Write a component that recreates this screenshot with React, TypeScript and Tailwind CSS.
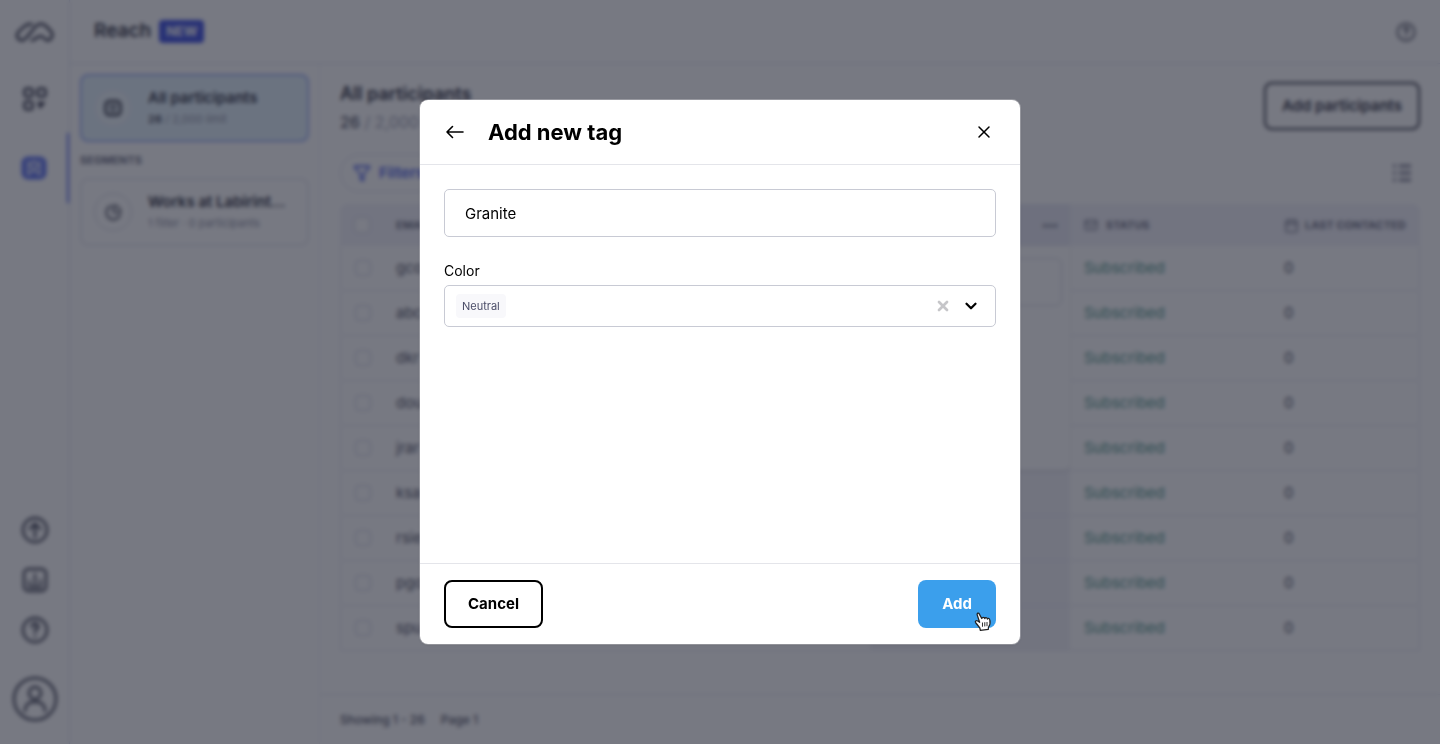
import React from "react";
import { Calendar, ChevronDown, Filter, Mail, PieChart, X } from "lucide-react";

const participants = ["gco", "abc", "dkr", "dou", "jrar", "ksa", "rsie", "pgo", "spu"];

const Logo = () => (
  <svg viewBox="45 60 120 72" className="h-6 w-10" fill="none" stroke="currentColor" strokeWidth="8" strokeLinecap="round" strokeLinejoin="round">
    <path d="M95 73C84 70 76 75 56 95C45 108 54 121 67 121C78 121 99 86 111 76Q124 66 138 78L153 94C162 105 154 121 142 121C134 121 132 108 122 108C112 108 105 121 95 121" />
  </svg>
);

const GridIcon = () => (
  <svg viewBox="0 0 26 26" className="size-6.5" fill="none" stroke="currentColor" strokeWidth="2.6">
    <rect x="2.5" y="2.5" width="8" height="8" rx="2.5" />
    <rect x="15.5" y="2.5" width="8" height="8" rx="2.5" />
    <rect x="2.5" y="15.5" width="8" height="8" rx="2.5" />
    <path d="M16 16.5h6.5L18 22Z" fill="currentColor" strokeWidth="1.5" strokeLinejoin="round" />
  </svg>
);

const ContactIcon = () => (
  <svg viewBox="0 0 28 28" className="size-7 text-[#5b70ee]" fill="none">
    <rect x="1.5" y="2.5" width="25" height="23" rx="6.5" fill="currentColor" />
    <circle cx="14" cy="11" r="3.5" stroke="#fff" strokeWidth="1.8" />
    <path d="M8.5 21c2-5 9-5 11 0M8 7v13M20 7v13" stroke="#fff" strokeWidth="1.4" strokeLinecap="round" />
  </svg>
);

const UpgradeIcon = () => (
  <svg viewBox="0 0 28 28" className="size-7" fill="none" stroke="currentColor" strokeWidth="2.4" strokeLinecap="round" strokeLinejoin="round">
    <circle cx="14" cy="14" r="12" />
    <path d="M14 21V8M8.5 13 14 7.5 19.500 13" />
  </svg>
);

const ReportsIcon = () => (
  <svg viewBox="0 0 28 28" className="size-7" fill="none" stroke="currentColor" strokeWidth="2.4" strokeLinecap="round">
    <rect x="3" y="3" width="22" height="22" rx="4.5" />
    <path d="M8.500 15v4M14 8v11M19.500 14v5M8 21h12" strokeWidth="2" />
  </svg>
);

const HelpIcon = ({ className }: { className: string }) => (
  <svg viewBox="0 0 28 28" className={className} fill="none" stroke="currentColor" strokeWidth="2.4" strokeLinecap="round">
    <circle cx="14" cy="14" r="12" />
    <path d="M11 10.500a3 3 0 1 1 4.500 2.600c-1 .6-1.500 1-1.500 2.400" strokeWidth="2.800" />
    <path d="M14 20v.2" strokeWidth="2.600" />
  </svg>
);

const UserIcon = () => (
  <svg viewBox="0 0 46 46" className="size-[46px]" fill="none" stroke="currentColor" strokeWidth="2.4">
    <circle cx="23" cy="23" r="21" />
    <circle cx="23" cy="17" r="6" />
    <path d="M13 35v-1c0-5 4-8 8-8h4c4 0 8 3 8 8v1" strokeLinecap="round" />
  </svg>
);

const FaceIcon = () => (
  <svg viewBox="0 0 18 18" className="size-[18px]" fill="none" stroke="currentColor" strokeWidth="2.4">
    <rect x="1.5" y="2" width="15" height="14" rx="4" />
    <path d="M5 7h8M6 10.5q3 2 6 0" strokeWidth="1.8" />
  </svg>
);

const ListIcon = () => (
  <svg viewBox="0 0 20 20" className="size-5" fill="none" stroke="currentColor" strokeWidth="3">
    <path d="M1 3h3M7 3h12M1 10h3M7 10h12M1 17h3M7 17h12" />
  </svg>
);

const BackIcon = () => (
  <svg viewBox="0 0 22 22" className="size-[22px]" fill="none" stroke="currentColor" strokeWidth="1.6" strokeLinecap="round" strokeLinejoin="round">
    <path d="M19 11H3M8.500 5.500 3 11l5.500 5.500" />
  </svg>
);

const HandCursor = () => (
  <svg viewBox="0 0 17 19" className="pointer-events-none absolute right-1 -bottom-1 h-5 w-[18px]" fill="#fff" stroke="#222" strokeWidth="1.2" strokeLinejoin="round">
    <path d="M5 2C4.5 .5 2.5 .8 3 2.7L5.3 9.8 3.5 8.5C2 7.6 .5 8.7 1.6 10.2L5.5 15.2 6 17.5 13.5 16.5 13.7 14.5C15.4 12 15.6 10 15 7.5 14.7 5.7 13 5.7 12.7 6.8 12.500 5 10.500 4.800 10.200 6.200 9.700 4.700 7.800 4.800 7.300 6.200Z" />
    <path d="M8 10v4M10.2 9.7v4M12.3 9.5v4" strokeWidth=".9" />
  </svg>
);

const Sidebar = () => (
  <nav className="flex w-[70px] shrink-0 flex-col items-center border-r border-[#dcdef0] text-[#35374a]">
    <a href="#home" aria-label="Home" className="flex h-16 items-center">
      <Logo />
    </a>
    <a href="#projects" aria-label="Projects" className="flex h-[69px] items-center">
      <GridIcon />
    </a>
    <a href="#reach" aria-label="Reach" className="flex h-[70px] w-full items-center justify-center border-r-2 border-[#5b70ee]">
      <ContactIcon />
    </a>
    <div className="mt-auto flex flex-col items-center gap-[22px] pb-[22px]">
      <a href="#upgrade" aria-label="Upgrade">
        <UpgradeIcon />
      </a>
      <a href="#reports" aria-label="Reports">
        <ReportsIcon />
      </a>
      <a href="#help" aria-label="Help">
        <HelpIcon className="size-7" />
      </a>
      <a href="#account" aria-label="Account" className="mt-2.5">
        <UserIcon />
      </a>
    </div>
  </nav>
);

const Segments = () => (
  <aside className="w-[250px] shrink-0 border-r border-[#f2f3fa] px-2.5 pt-2.5">
    <a href="#all" className="flex h-[68px] items-center rounded-lg border-2 border-[#9db0f7] bg-[#e2f1fb] pl-3">
      <span className="flex size-[38px] items-center justify-center rounded-full border border-[#dcdeec] bg-white/40">
        <FaceIcon />
      </span>
      <span className="ml-4">
        <span className="block text-[15px] leading-[22px] font-semibold">All participants</span>
        <span className="block text-[11px] leading-5 text-[#8d90a4]">
          <b className="text-[#4b4d5e]">26</b> / 2,000 limit
        </span>
      </span>
    </a>
    <h2 className="mt-2.5 mb-2.5 text-[11px] leading-4 font-bold text-[#6a6c80]">SEGMENTS</h2>
    <a href="#segment" className="flex h-[68px] items-center rounded-lg border-2 border-[#e8e9f3] pl-3">
      <span className="flex size-[38px] items-center justify-center rounded-full border border-[#cfd1e2]">
        <PieChart size={17} strokeWidth={2.4} className="text-[#35374a]" />
      </span>
      <span className="ml-4">
        <span className="block text-[15px] leading-[22px] font-semibold">Works at Labirint...</span>
        <span className="block text-[11px] leading-5 text-[#8d90a4]">1 filter · 0 participants</span>
      </span>
    </a>
  </aside>
);

const ParticipantsTable = () => (
  <table className="w-full table-fixed border-separate border-spacing-0 text-left">
    <thead>
      <tr className="h-[42px] bg-[#f2f2fa] text-[11px] font-semibold text-[#6a6c80]">
        <th className="w-11 rounded-tl-lg">
          <input type="checkbox" aria-label="Select all" className="ml-3.5 block size-4 appearance-none rounded border border-[#d0d2e2] bg-white" />
        </th>
        <th className="pl-3">EMAIL</th>
        <th className="relative w-[200px] bg-[#e8e9f4] pr-3 text-right">
          •••
          <div className="absolute top-full right-0 h-[224px] w-[300px] rounded-b-md bg-white p-2 pt-3 shadow-sm">
            <div className="h-12 rounded-md border border-[#d5d7e6]" />
          </div>
        </th>
        <th className="w-[200px] pl-3.5">
          <span className="flex items-center gap-2">
            <Mail size={14} />
            STATUS
          </span>
        </th>
        <th className="w-[150px] rounded-tr-lg pl-3.5">
          <span className="flex items-center gap-1.5 whitespace-nowrap">
            <Calendar size={15} className="shrink-0" />
            LAST CONTACTED
          </span>
        </th>
      </tr>
    </thead>
    <tbody>
      {participants.map((name) => (
        <tr key={name} className="h-[45px] text-[15px] text-[#4b4d5e]">
          <td className="border-b border-l border-[#e8e9f3]">
            <input type="checkbox" aria-label={`Select ${name}`} className="ml-3.5 block size-4 appearance-none rounded border border-[#cbcdde] bg-white" />
          </td>
          <td className="border-b border-[#e8e9f3] pl-3">{name}</td>
          <td className="border-b border-[#e8e9f3] bg-[#f2f2f8]" />
          <td className="border-b border-[#e8e9f3] pl-3.5 text-[#4a9186]">Subscribed</td>
          <td className="border-r border-b border-[#e8e9f3] pl-3.5">0</td>
        </tr>
      ))}
    </tbody>
  </table>
);

const AddTagDialog = () => {
  const [name, setName] = React.useState("Granite");

  return (
    <div className="fixed inset-0 flex items-center justify-center bg-[#1c1f2e]/60 backdrop-blur-[2px]">
      <div role="dialog" aria-label="Add new tag" className="flex w-full max-w-[600px] flex-col rounded-lg bg-white text-black shadow-sm ring-1 ring-white/25">
        <header className="flex h-[65px] items-center border-b border-[#e4e5ea] px-6">
          <button type="button" aria-label="Back">
            <BackIcon />
          </button>
          <h2 className="ml-[22px] text-[22px] leading-7 font-bold">Add new tag</h2>
          <button type="button" aria-label="Close" className="ml-auto p-0.5">
            <X size={20} strokeWidth={1.8} />
          </button>
        </header>

        <div className="min-h-[398px] p-6">
          <input
            aria-label="Tag name"
            value={name}
            onChange={(e) => setName(e.target.value)}
            className="h-12 w-full rounded-[5px] border border-[#c8cad4] px-5 text-[15px] outline-none"
          />
          <label htmlFor="color" className="mt-6 mb-1 block text-sm leading-5">
            Color
          </label>
          <div className="flex h-[42px] items-center rounded-[5px] border border-[#c8cad4] pr-[15px] pl-[11px]">
            <select id="color" className="h-6 appearance-none rounded bg-[#f8f8fb] px-1.5 text-[11px] text-[#4b4d68] outline-none">
              <option>Neutral</option>
            </select>
            <button type="button" aria-label="Clear color" className="ml-auto text-[#c6c6c9]">
              <X size={16} strokeWidth={4} />
            </button>
            <ChevronDown size={18} strokeWidth={3} className="ml-[11px]" />
          </div>
        </div>

        <footer className="flex items-center justify-between border-t border-[#e4e5ea] px-6 py-4">
          <button type="button" className="h-12 rounded-lg border-2 border-black px-[22px] text-[15px] font-bold">
            Cancel
          </button>
          <button type="button" className="relative h-12 rounded-lg bg-[#3b9fec] px-6 text-[15px] font-bold text-white">
            Add
            <HandCursor />
          </button>
        </footer>
      </div>
    </div>
  );
};

const App = () => {
  return (
    <div className="flex min-h-screen bg-white font-[Inter,sans-serif] text-[#2a2c3c]">
      <Sidebar />

      <div className="flex min-w-0 grow flex-col">
        <header className="flex h-16 items-center border-b border-[#dcdef0] px-6">
          <h1 className="text-[19px] font-semibold">Reach</h1>
          <span className="ml-2 rounded-sm bg-[#3a4ce0] px-[7px] text-[13px] leading-[23px] font-bold text-white">NEW</span>
          <a href="#support" aria-label="Support" className="ml-auto text-[#4b4d5e]">
            <HelpIcon className="size-5" />
          </a>
        </header>

        <div className="flex grow">
          <Segments />

          <main className="flex min-w-0 grow flex-col">
            <div className="grow px-5 pt-[18px]">
              <div className="flex items-start justify-between">
                <div>
                  <h2 className="text-lg leading-6 font-semibold">All participants</h2>
                  <p className="mt-1 text-base leading-6 text-[#a0a2b4]">
                    <span className="font-medium text-[#4b4d5e]">26</span> / 2,000 limit
                  </p>
                </div>
                <button type="button" className="h-12 rounded-lg border-2 border-[#2a2c3c] px-4 text-[15px] font-semibold">
                  Add participants
                </button>
              </div>

              <div className="mt-5 mb-3 flex items-center justify-between pr-2">
                <button type="button" className="flex h-[38px] items-center gap-2 rounded-full border border-[#dcdeec] px-3 text-[15px] font-semibold text-[#4a5de6]">
                  <Filter size={18} strokeWidth={2.4} />
                  Filters
                </button>
                <button type="button" aria-label="Columns" className="text-[#7c7e92]">
                  <ListIcon />
                </button>
              </div>

              <ParticipantsTable />
            </div>

            <footer className="flex h-[50px] items-center gap-4 border-t border-[#e8e9f3] px-5 text-xs font-medium text-[#4b4d5e]">
              <span>Showing 1 - 26</span>
              <span>Page 1</span>
            </footer>
          </main>
        </div>
      </div>

      <AddTagDialog />
    </div>
  );
};

export default App;
